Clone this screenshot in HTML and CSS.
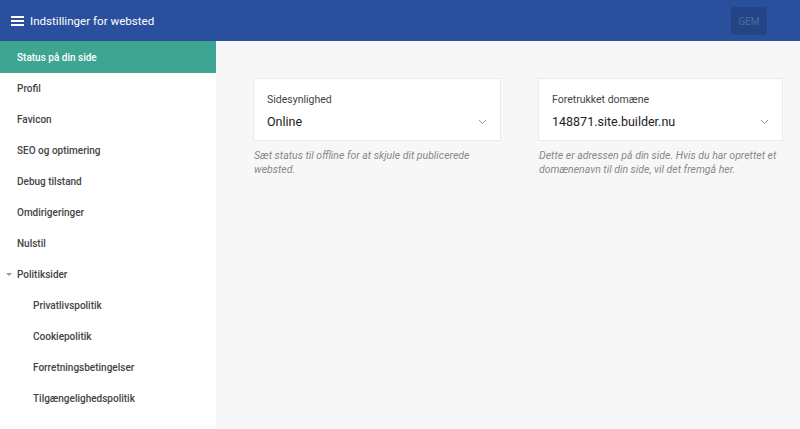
FILE: index.html
```html
<!DOCTYPE html>
<html lang="da">
<head>
    <meta charset="UTF-8">
    <meta name="viewport" content="width=device-width, initial-scale=1.0">
    <title>Indstillinger for websted</title>
    <link rel="stylesheet" href="styles.css">
</head>
<body>
    <div class="header">
        <div class="header-title">
            <svg class="menu-icon" width="13" height="12" viewBox="0 0 13 12">
                <rect x="0" y="1" width="13" height="2" fill="#fff"/>
                <rect x="0" y="5" width="13" height="2" fill="#fff"/>
                <rect x="0" y="9" width="13" height="2" fill="#fff"/>
            </svg>
            Indstillinger for websted
        </div>
        <button class="save-btn" disabled>GEM</button>
    </div>

    <div class="layout">
        <div class="sidebar">
            <a class="nav-item active" href="#">Status på din side</a>
            <a class="nav-item" href="#">Profil</a>
            <a class="nav-item" href="#">Favicon</a>
            <a class="nav-item" href="#">SEO og optimering</a>
            <a class="nav-item" href="#">Debug tilstand</a>
            <a class="nav-item" href="#">Omdirigeringer</a>
            <a class="nav-item" href="#">Nulstil</a>
            <a class="nav-item group" href="#"><span class="caret"></span>Politiksider</a>
            <a class="nav-item sub" href="#">Privatlivspolitik</a>
            <a class="nav-item sub" href="#">Cookiepolitik</a>
            <a class="nav-item sub" href="#">Forretningsbetingelser</a>
            <a class="nav-item sub" href="#">Tilgængelighedspolitik</a>
        </div>

        <div class="content">
            <div class="field">
                <div class="select-box">
                    <div class="select-label">Sidesynlighed</div>
                    <div class="select-value">
                        Online
                        <svg class="chevron" width="9" height="6" viewBox="0 0 9 6">
                            <path d="M1 1 L4.5 4.5 L8 1" fill="none" stroke="#999" stroke-width="1"/>
                        </svg>
                    </div>
                </div>
                <p class="hint">Sæt status til offline for at skjule dit publicerede websted.</p>
            </div>

            <div class="field">
                <div class="select-box">
                    <div class="select-label">Foretrukket domæne</div>
                    <div class="select-value">
                        148871.site.builder.nu
                        <svg class="chevron" width="9" height="6" viewBox="0 0 9 6">
                            <path d="M1 1 L4.5 4.5 L8 1" fill="none" stroke="#999" stroke-width="1"/>
                        </svg>
                    </div>
                </div>
                <p class="hint">Dette er adressen på din side. Hvis du har oprettet et domænenavn til din side, vil det fremgå her.</p>
            </div>
        </div>
    </div>
</body>
</html>
```

FILE: styles.css
```css
body {
    margin: 0;
    font-family: Roboto, "Liberation Sans", Arial, sans-serif;
    background-color: #f7f7f7;
    height: 429px;
    display: flex;
    flex-direction: column;
    overflow: hidden;
}

.header {
    height: 41px;
    background-color: #2a4f9c;
    display: flex;
    align-items: center;
    justify-content: space-between;
    padding: 0 33px 0 11px;
    flex-shrink: 0;
}

.header-title {
    display: flex;
    align-items: center;
    gap: 6px;
    color: #fff;
    font-size: 11.6px;
}

.menu-icon {
    display: block;
}

.save-btn {
    width: 36px;
    height: 28px;
    background-color: #244585;
    color: #51699c;
    border: none;
    border-radius: 3px;
    font-family: inherit;
    font-size: 10px;
    padding: 0;
    margin-top: 1px;
}

.layout {
    flex: 1;
    display: flex;
}

.sidebar {
    width: 216px;
    background-color: #fff;
    display: flex;
    flex-direction: column;
    flex-shrink: 0;
}

.nav-item {
    display: flex;
    align-items: center;
    height: 31px;
    padding-left: 17px;
    color: #444;
    font-size: 10px;
    font-weight: 500;
    text-decoration: none;
}

.nav-item.active {
    height: 32px;
    background-color: #3ea593;
    color: #fff;
}

.nav-item.group {
    position: relative;
}

.caret {
    position: absolute;
    left: 6px;
    top: 14px;
    border-left: 3px solid transparent;
    border-right: 3px solid transparent;
    border-top: 3px solid #999;
}

.nav-item.sub {
    padding-left: 33px;
}

.content {
    flex: 1;
    display: grid;
    grid-template-columns: 248px 245px;
    column-gap: 37px;
    align-items: start;
    padding: 37px 0 0 37px;
}

.select-box {
    background-color: #fff;
    border: 1px solid #ebebeb;
    height: 63px;
    box-sizing: border-box;
    padding: 14px 13px 0 13px;
}

.select-label {
    font-size: 10.5px;
    color: #444;
}

.select-value {
    display: flex;
    align-items: center;
    justify-content: space-between;
    margin-top: 8px;
    font-size: 12.5px;
    color: #222;
}

.chevron {
    display: block;
}

.hint {
    margin: 8px 0 0 1px;
    font-size: 10.5px;
    line-height: 14px;
    font-style: italic;
    color: #888;
}
```
